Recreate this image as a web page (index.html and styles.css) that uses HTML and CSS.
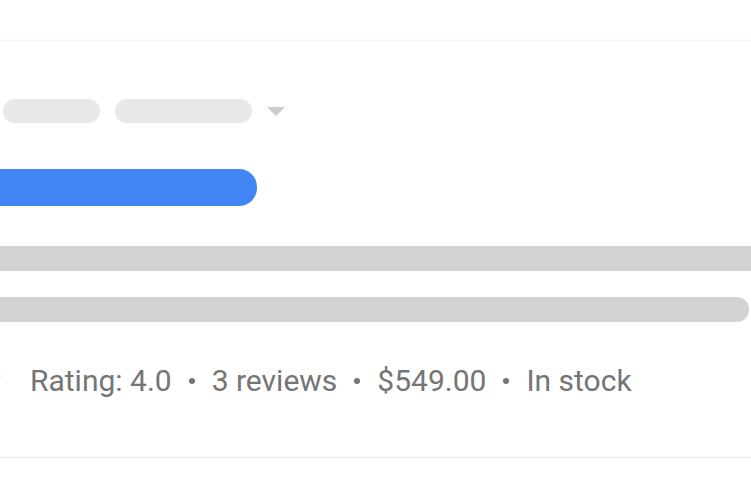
FILE: index.html
```html
<!DOCTYPE html>
<html>

<head>
  <title>Product card</title>
  <link rel="stylesheet" href="styles.css">
</head>

<body>
  <div class="card">
    <div class="chips">
      <span class="chip chip-short"></span>
      <span class="chip chip-long"></span>
      <span class="caret"></span>
    </div>
    <div class="title-bar"></div>
    <div class="line line-full"></div>
    <div class="line line-short"></div>
    <p class="meta">
      <span class="star"></span>
      <span>Rating: 4.0</span>
      <span class="dot"></span>
      <span>3 reviews</span>
      <span class="dot"></span>
      <span>$549.00</span>
      <span class="dot"></span>
      <span>In stock</span>
    </p>
  </div>
</body>

</html>
```

FILE: styles.css
```css
body {
  margin: 0;
  overflow: hidden;
  background-color: #fff;
  font-family: Roboto, "Liberation Sans", sans-serif;
}

.card {
  margin: 41px -40px 0 -40px;
  height: 417px;
  box-sizing: border-box;
  padding-top: 58px;
  background: #fff;
  overflow: hidden;
  border-bottom: 1px solid #ececec;
  box-shadow: 0 4px 9px rgba(0, 0, 0, 0.1), 0 -1px 1px rgba(0, 0, 0, 0.02);
}

.chips {
  display: flex;
  align-items: center;
  gap: 15px;
  padding-left: 43px;
}

.chip {
  display: block;
  height: 24px;
  border-radius: 12px;
  background: #e8e8e8;
}

.chip-short {
  width: 97px;
}

.chip-long {
  width: 137px;
}

.caret {
  width: 0;
  height: 0;
  border-left: 9px solid transparent;
  border-right: 9px solid transparent;
  border-top: 9px solid #cccccc;
}

.title-bar {
  margin-top: 46px;
  width: 297px;
  height: 37px;
  border-radius: 0 18px 18px 0;
  background: #4285f4;
}

.line {
  height: 25px;
  background: #d2d3d2;
}

.line-full {
  margin-top: 40px;
}

.line-short {
  margin-top: 26px;
  margin-right: 42px;
  border-radius: 0 12px 12px 0;
}

.meta {
  display: flex;
  align-items: center;
  margin: 41px 0 0 0;
  padding-left: 70px;
  font-size: 30px;
  line-height: 36px;
  color: #757575;
}

.star {
  width: 24px;
  height: 24px;
  margin-left: -51px;
  margin-right: 27px;
  margin-top: -4px;
  background: #e3e3e3;
  clip-path: polygon(50% 0, 61% 35%, 98% 35%, 68% 57%, 79% 91%, 50% 70%, 21% 91%, 32% 57%, 2% 35%, 39% 35%);
}

.dot {
  width: 6px;
  height: 6px;
  border-radius: 50%;
  margin: 0 17px;
  background: #757575;
}
```
